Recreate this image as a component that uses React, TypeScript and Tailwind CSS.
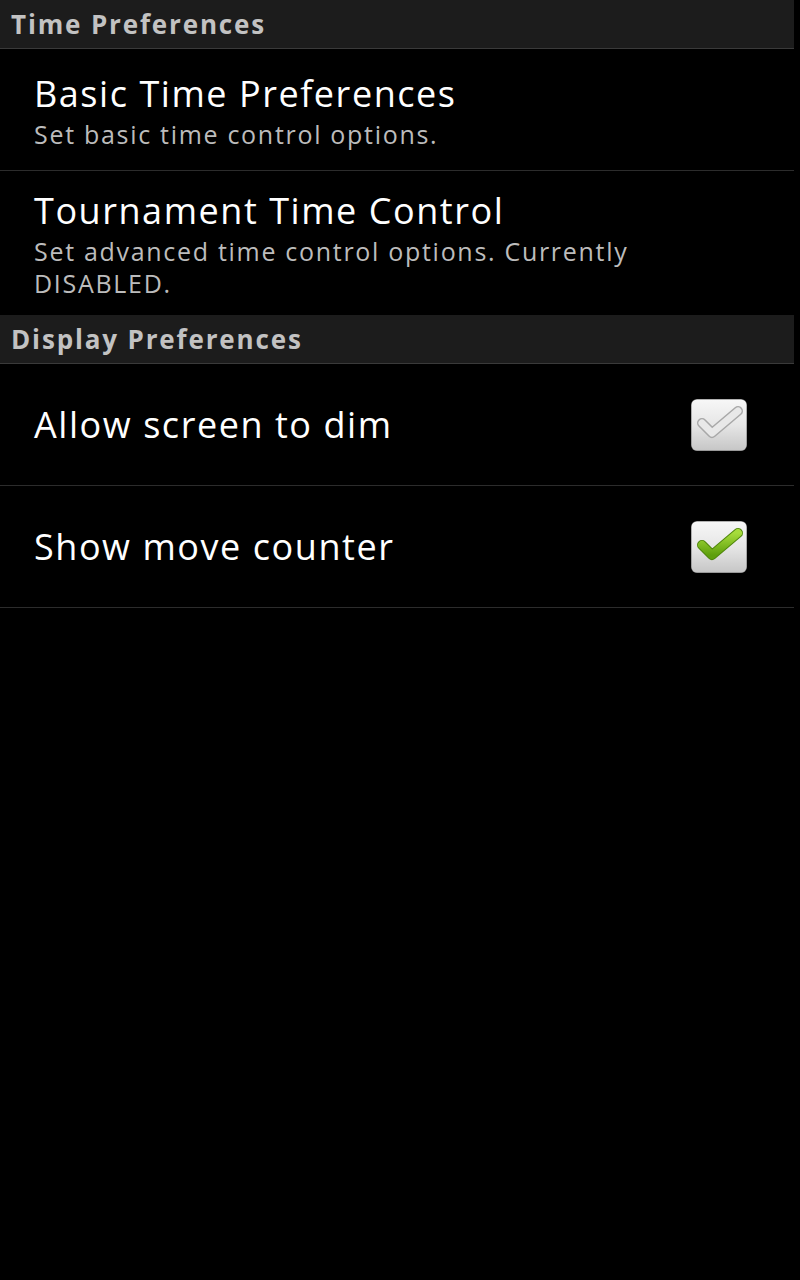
import React from "react";

type Pref = {
  title: string;
  summary?: string;
  checked?: boolean;
};

const timePrefs: Pref[] = [
  { title: "Basic Time Preferences", summary: "Set basic time control options." },
  {
    title: "Tournament Time Control",
    summary: "Set advanced time control options. Currently DISABLED.",
  },
];

const displayPrefs: Pref[] = [
  { title: "Allow screen to dim", checked: false },
  { title: "Show move counter", checked: true },
];

function CheckBox({ checked }: { checked: boolean }) {
  const id = checked ? "on" : "off";
  return (
    <svg width="58" height="54" viewBox="0 0 58 54" className="shrink-0">
      <defs>
        <linearGradient id={`box-${id}`} x1="0" y1="0" x2="0" y2="1">
          <stop offset="0" stopColor="#f7f7f7" />
          <stop offset="0.5" stopColor="#e6e6e6" />
          <stop offset="1" stopColor="#c6c6c6" />
        </linearGradient>
        <linearGradient id={`chk-${id}`} x1="0" y1="0" x2="0" y2="1">
          <stop offset="0" stopColor="#a6dc3c" />
          <stop offset="1" stopColor="#5e9f0c" />
        </linearGradient>
      </defs>
      <rect x="1" y="1" width="56" height="52" rx="6" fill="#6b6b6b" />
      <rect x="1.5" y="1.5" width="55" height="51" rx="5.5" fill={`url(#box-${id})`} />
      {checked ? (
        <>
          <path d="M12 25 L22 35 L48 13" fill="none" stroke="#4f860b" strokeWidth="10" strokeLinecap="round" strokeLinejoin="round" />
          <path d="M12 25 L22 35 L48 13" fill="none" stroke={`url(#chk-${id})`} strokeWidth="8" strokeLinecap="round" strokeLinejoin="round" />
        </>
      ) : (
        <>
          <path d="M12 25 L22 35 L48 13" fill="none" stroke="#a8a8a8" strokeWidth="10" strokeLinecap="round" strokeLinejoin="round" />
          <path d="M12 25 L22 35 L48 13" fill="none" stroke="#e8e8e8" strokeWidth="7" strokeLinecap="round" strokeLinejoin="round" />
        </>
      )}
    </svg>
  );
}

function Category({ label }: { label: string }) {
  return (
    <div className="h-[49px] flex items-center pl-[11px] bg-[#1c1c1c] border-b border-[#3a3a3a]">
      <span className="text-[26px] font-bold tracking-[1.85px] text-[#c2c2c2] leading-none">{label}</span>
    </div>
  );
}

function PrefRow({ pref, last }: { pref: Pref; last?: boolean }) {
  return (
    <div
      className={
        "min-h-[122px] flex items-center pl-[34px] pr-[46px] py-4 " +
        (last ? "" : "border-b border-[#2c2c2c]")
      }
    >
      <div className="flex flex-col flex-1">
        <span className="text-[36px] tracking-[1.55px] leading-[48px] text-white">{pref.title}</span>
        {pref.summary && (
          <span className="text-[25px] tracking-[1.7px] leading-8 text-[#bcbcbc]">{pref.summary}</span>
        )}
      </div>
      {pref.checked !== undefined && <CheckBox checked={pref.checked} />}
    </div>
  );
}

export default function App() {
  return (
    <div
      className="w-[800px] h-[1280px] bg-black overflow-hidden"
      style={{ fontFamily: '"Open Sans", "Noto Sans", sans-serif' }}
    >
      <div className="w-[794px]">
        <Category label="Time Preferences" />
        {timePrefs.map((p, i) => (
          <PrefRow key={p.title} pref={p} last={i === timePrefs.length - 1} />
        ))}
        <Category label="Display Preferences" />
        {displayPrefs.map((p) => (
          <PrefRow key={p.title} pref={p} />
        ))}
      </div>
    </div>
  );
}
